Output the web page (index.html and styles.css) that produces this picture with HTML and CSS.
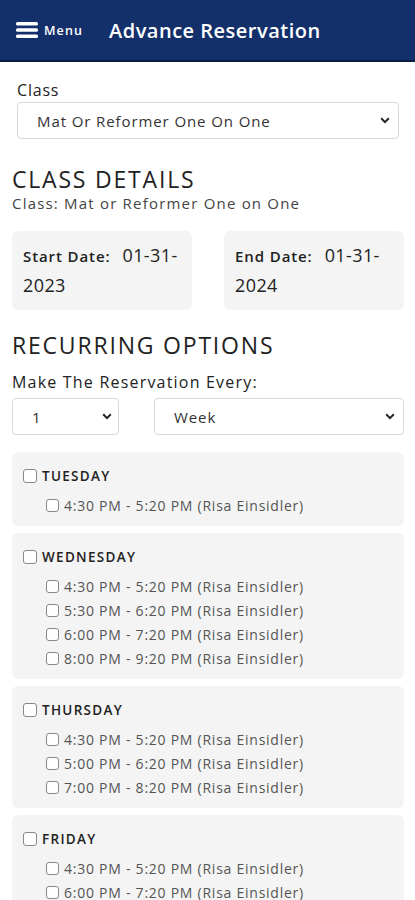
FILE: index.html
```html
<!DOCTYPE html>
<html lang="en">
<head>
	<meta charset="UTF-8">
	<title>Advance Reservation</title>
	<link rel="stylesheet" href="styles.css">
</head>
<body>
	<div class="topbar">
		<div class="menu">
			<svg width="22" height="16" viewBox="0 0 22 16"><rect x="0" y="0" width="22" height="3.4" rx="1.5" fill="#fff"/><rect x="0" y="6.3" width="22" height="3.4" rx="1.5" fill="#fff"/><rect x="0" y="12.6" width="22" height="3.4" rx="1.5" fill="#fff"/></svg>
			<span>Menu</span>
		</div>
		<h1>Advance Reservation</h1>
	</div>

	<div class="page">
		<div class="field">
			<label>Class</label>
			<div class="select">
				<span>Mat Or Reformer One On One</span>
				<svg width="10" height="7" viewBox="0 0 10 7"><path d="M1.2 1.3 5 5.1 8.8 1.3" fill="none" stroke="#222" stroke-width="2"/></svg>
			</div>
		</div>

		<h2>CLASS DETAILS</h2>
		<p class="sub">Class: Mat or Reformer One on One</p>

		<div class="dates">
			<div class="date"><b>Start Date:</b><span class="val">01-31-2023</span></div>
			<div class="date"><b>End Date:</b><span class="val">01-31-2024</span></div>
		</div>

		<h2 class="recur">RECURRING OPTIONS</h2>
		<label class="every">Make The Reservation Every:</label>
		<div class="row">
			<div class="select small">
				<span>1</span>
				<svg width="10" height="7" viewBox="0 0 10 7"><path d="M1.2 1.3 5 5.1 8.8 1.3" fill="none" stroke="#222" stroke-width="2"/></svg>
			</div>
			<div class="select wide">
				<span>Week</span>
				<svg width="10" height="7" viewBox="0 0 10 7"><path d="M1.2 1.3 5 5.1 8.8 1.3" fill="none" stroke="#222" stroke-width="2"/></svg>
			</div>
		</div>

		<div class="day">
			<div class="dayname"><i class="box"></i>TUESDAY</div>
			<div class="slot"><i class="box"></i>4:30 PM - 5:20 PM (Risa Einsidler)</div>
		</div>

		<div class="day">
			<div class="dayname"><i class="box"></i>WEDNESDAY</div>
			<div class="slot"><i class="box"></i>4:30 PM - 5:20 PM (Risa Einsidler)</div>
			<div class="slot"><i class="box"></i>5:30 PM - 6:20 PM (Risa Einsidler)</div>
			<div class="slot"><i class="box"></i>6:00 PM - 7:20 PM (Risa Einsidler)</div>
			<div class="slot"><i class="box"></i>8:00 PM - 9:20 PM (Risa Einsidler)</div>
		</div>

		<div class="day">
			<div class="dayname"><i class="box"></i>THURSDAY</div>
			<div class="slot"><i class="box"></i>4:30 PM - 5:20 PM (Risa Einsidler)</div>
			<div class="slot"><i class="box"></i>5:00 PM - 6:20 PM (Risa Einsidler)</div>
			<div class="slot"><i class="box"></i>7:00 PM - 8:20 PM (Risa Einsidler)</div>
		</div>

		<div class="day">
			<div class="dayname"><i class="box"></i>FRIDAY</div>
			<div class="slot"><i class="box"></i>4:30 PM - 5:20 PM (Risa Einsidler)</div>
			<div class="slot"><i class="box"></i>6:00 PM - 7:20 PM (Risa Einsidler)</div>
			<div class="slot"><i class="box"></i>7:00 PM - 8:20 PM (Risa Einsidler)</div>
		</div>
	</div>
</body>
</html>
```

FILE: styles.css
```css
body{margin:0;font-family:"Open Sans","Liberation Sans",sans-serif;color:#222;background:#fff;}
h1,h2,p{margin:0;}

.topbar{display:flex;align-items:center;height:60px;background:#14306b;border-bottom:2px solid #0b1c45;color:#fff;}
.topbar .menu{display:flex;align-items:center;margin-left:16px;width:93px;}
.topbar .menu span{margin-left:6px;font-size:12.5px;font-weight:600;letter-spacing:1.1px;}
.topbar h1{font-size:20px;font-weight:600;letter-spacing:0.5px;}

.page{padding:0 11px 40px 12px;}

.field{padding:18px 5px 0;}
.field label{display:block;font-size:16px;letter-spacing:0.8px;line-height:20px;margin-bottom:2px;}

.select{box-sizing:border-box;display:flex;align-items:center;justify-content:space-between;height:37px;padding:0 8px 0 19px;border:1px solid #d9d9d9;border-radius:4px;background:#fff;font-size:15px;letter-spacing:0.9px;color:#333;}
.select.small{width:107px;padding-right:6px;}
.select.wide{width:250px;}

h2{font-size:23px;font-weight:500;letter-spacing:1.8px;line-height:30px;}
h2{margin-top:25px;}
.sub{font-size:15px;letter-spacing:1.2px;color:#444;line-height:18px;}

.dates{display:flex;justify-content:space-between;margin-top:19px;}
.date{width:158px;padding:10px 11px 10px;background:#f4f4f4;border-radius:6px;font-size:18px;line-height:29px;letter-spacing:0.4px;}
.date b{font-size:15px;font-weight:600;letter-spacing:0.9px;margin-right:12px;}

h2.recur{margin-top:20px;}
.every{display:block;font-size:16px;letter-spacing:1.2px;margin-top:12px;line-height:20px;}
.row{display:flex;justify-content:space-between;margin-top:6px;margin-bottom:17px;}

.day{background:#f4f4f4;border-radius:6px;padding:14px 11px 9px;margin-bottom:7px;}
.dayname{display:flex;align-items:center;height:20px;font-size:13.5px;font-weight:600;letter-spacing:1.3px;}
.dayname .box{width:12px;height:12px;margin-right:5px;}
.slot{display:flex;align-items:center;height:24px;padding-left:23px;font-size:14px;letter-spacing:0.75px;color:#555;}
.dayname + .slot{margin-top:7px;}
.slot .box{width:11px;height:11px;margin-right:5px;}
.box{display:inline-block;border:1px solid #888;border-radius:3px;background:#fff;}
```
